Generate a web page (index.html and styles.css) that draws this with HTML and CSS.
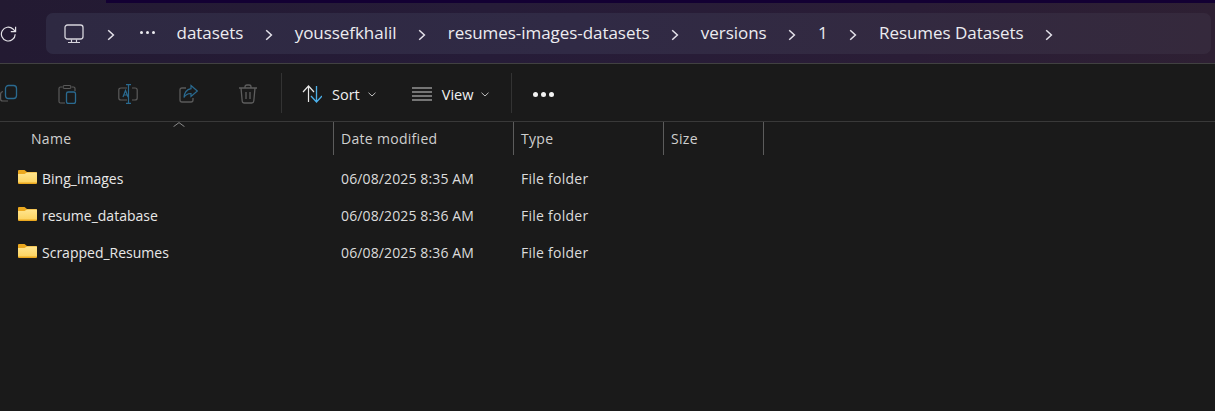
FILE: index.html
```html
<!DOCTYPE html>
<html lang="en">
<head>
<meta charset="utf-8">
<title>Resumes Datasets</title>
<link rel="stylesheet" href="styles.css">
</head>
<body>
<div class="window">
  <header class="addressbar">
    <div class="strip"></div>
    <div class="address-row">
      <svg class="refresh" width="18" height="18" viewBox="0 0 18 18"><path d="M15.200 9.200A6.900 6.900 0 1 1 13 4L15.200 6.200M15.600 1.800V6.600H10.800" fill="none" stroke="#e4e2e8" stroke-width="1.200"/></svg>
      <nav class="crumbs">
        <svg class="pc" width="20" height="20" viewBox="0 0 20 20"><rect x="1" y="1" width="18" height="14" rx="2.500" fill="none" stroke="#d6d4dc" stroke-width="1.300"/><path d="M7.500 15.500v3M12.500 15.500v3M4 18.500h12" fill="none" stroke="#d6d4dc" stroke-width="1.200"/></svg>
        <svg class="chev" width="8" height="12" viewBox="0 0 8 12"><path d="M1.200 1.200 6.400 6 1.200 10.800" /></svg>
        <span class="more"><i></i><i></i><i></i></span>
        <span class="crumb">datasets</span>
        <svg class="chev" width="8" height="12" viewBox="0 0 8 12"><path d="M1.200 1.200 6.400 6 1.200 10.800" /></svg>
        <span class="crumb">youssefkhalil</span>
        <svg class="chev" width="8" height="12" viewBox="0 0 8 12"><path d="M1.200 1.200 6.400 6 1.200 10.800" /></svg>
        <span class="crumb">resumes-images-datasets</span>
        <svg class="chev" width="8" height="12" viewBox="0 0 8 12"><path d="M1.200 1.200 6.400 6 1.200 10.800" /></svg>
        <span class="crumb">versions</span>
        <svg class="chev" width="8" height="12" viewBox="0 0 8 12"><path d="M1.200 1.200 6.400 6 1.200 10.800" /></svg>
        <span class="crumb">1</span>
        <svg class="chev" width="8" height="12" viewBox="0 0 8 12"><path d="M1.200 1.200 6.400 6 1.200 10.800" /></svg>
        <span class="crumb">Resumes Datasets</span>
        <svg class="chev" width="8" height="12" viewBox="0 0 8 12"><path d="M1.200 1.200 6.400 6 1.200 10.800" /></svg>
      </nav>
    </div>
  </header>

  <div class="toolbar">
    <div class="tool-icons">
      <svg class="copy" width="19" height="20" viewBox="0 0 19 20" fill="none"><path d="M4 7.500Q1.600 8 1.600 10v5q0 2 2 2h5.400" stroke="#5a5a5a" stroke-width="1.200"/><rect x="6.500" y="1.500" width="11" height="13" rx="3" stroke="#2a6a90" stroke-width="1.300"/></svg>
      <svg width="19" height="20" viewBox="0 0 19 20" fill="none"><path d="M4 3H2.500Q1 3 1 4.500v13Q1 19 2.500 19H7M14 3h1.500Q17 3 17 4.500V7M5 3q0-1.500 1.500-1.500h5Q13 1.500 13 3t-1.500 1.500h-5Q5 4.500 5 3Z" stroke="#5a5a5a" stroke-width="1.200"/><rect x="8.500" y="8" width="9" height="11.500" rx="1.800" stroke="#2a6a90" stroke-width="1.300"/></svg>
      <svg width="20" height="20" viewBox="0 0 20 20" fill="none"><path d="M9 4H3Q.8 4 .8 6v8q0 2 2.200 2h6M14 4h3q2.200 0 2.200 2v8q0 2-2.200 2h-3" stroke="#5a5a5a" stroke-width="1.200"/><path d="M8 .7h5M10.500.7v18.600M8 19.300h5M5 13l2.500-6.500L10 13M5.800 11H9.200" stroke="#2a6a90" stroke-width="1.200"/></svg>
      <svg width="19" height="20" viewBox="0 0 19 20" fill="none"><path d="M7 4H3Q1 4 1 6v10q0 2 2 2h9q2 0 2-2v-2" stroke="#5a5a5a" stroke-width="1.300"/><path d="M12 1.500 18.300 7 12 12.500V9.500Q7.500 9.300 5 13.500 5.500 6 12 4.700Z" stroke="#2a6a90" stroke-width="1.200"/></svg>
      <svg width="18" height="20" viewBox="0 0 18 20" fill="none"><path d="M0 4H18M6 4V2.800Q6 1 8 1h2q2 0 2 1.800V4M2 4l1.200 13q.2 2 2.200 2h7.200q2 0 2.200-2L16 4M7 8v7M11 8v7" stroke="#5e5e5e" stroke-width="1.300"/></svg>
    </div>
    <div class="sep"></div>
    <div class="tool sort">
      <svg width="20" height="18" viewBox="0 0 20 18" fill="none"><path d="M1 7 6.500 1 12 7M6.500 1V17" stroke="#e8e8e8" stroke-width="1.200"/><path d="M9 11l5.500 6L20 11M14.500 17V1" stroke="#4cb0ea" stroke-width="1.300"/></svg>
      <span>Sort</span>
      <svg class="caret" width="8" height="5" viewBox="0 0 8 5"><path d="M.5.700 4 4 7.500.700"/></svg>
    </div>
    <div class="tool view">
      <svg width="20" height="14" viewBox="0 0 20 14" fill="none"><path d="M0 1H20M0 5H20M0 9H20M0 13H20" stroke="#cfcfcf" stroke-width="1.100"/></svg>
      <span>View</span>
      <svg class="caret" width="8" height="5" viewBox="0 0 8 5"><path d="M.5.700 4 4 7.500.700"/></svg>
    </div>
    <div class="sep sep-view"></div>
    <div class="dots"><i></i><i></i><i></i></div>
  </div>

  <div class="table">
    <div class="row head">
      <div class="cell name-head">Name<svg class="sort-caret" width="12" height="5" viewBox="0 0 12 5"><path d="M.5 4.700 6 .6l5.500 4.100"/></svg></div>
      <div class="cell">Date modified</div>
      <div class="cell">Type</div>
      <div class="cell">Size</div>
    </div>
    <div class="row item">
      <div class="cell name"><svg class="folder" width="19" height="14" viewBox="0 0 19 14"><use href="#folder"/></svg>Bing_images</div>
      <div class="cell date">06/08/2025 8:35 AM</div>
      <div class="cell type">File folder</div>
      <div class="cell"></div>
    </div>
    <div class="row item">
      <div class="cell name"><svg class="folder" width="19" height="14" viewBox="0 0 19 14"><use href="#folder"/></svg>resume_database</div>
      <div class="cell date">06/08/2025 8:36 AM</div>
      <div class="cell type">File folder</div>
      <div class="cell"></div>
    </div>
    <div class="row item">
      <div class="cell name"><svg class="folder" width="19" height="14" viewBox="0 0 19 14"><use href="#folder"/></svg>Scrapped_Resumes</div>
      <div class="cell date">06/08/2025 8:36 AM</div>
      <div class="cell type">File folder</div>
      <div class="cell"></div>
    </div>
  </div>
</div>
<svg class="defs" width="0" height="0">
  <defs>
    <linearGradient id="fold" x1="0" y1="0" x2="0" y2="1"><stop offset="0" stop-color="#ffe58f"/><stop offset="1" stop-color="#fcd462"/></linearGradient>
    <g id="folder">
      <path d="M1 0H6.500L9 2H18Q19 2 19 3V13Q19 14 18 14H1Q0 14 0 13V1Q0 0 1 0Z" fill="#eba81f"/>
      <path d="M0 4H6.500L9 2.500H19V12.500H0Z" fill="url(#fold)"/>
    </g>
  </defs>
</svg>
</body>
</html>
```
FILE: styles.css
```css
* { box-sizing: border-box; }
html, body { margin: 0; padding: 0; }
body {
  width: 1215px;
  height: 411px;
  overflow: hidden;
  background: #1a1a1a;
  font-family: "Open Sans", "Noto Sans", "Liberation Sans", sans-serif;
  color: #e6e6e6;
}
.window { display: flex; flex-direction: column; height: 100%; overflow: hidden; }
.defs { display: block; }

.addressbar {
  height: 64px;
  flex: none;
  background: linear-gradient(90deg, #231a32 0%, #261c38 40%, #2a1d36 75%, #2e2033 100%);
  border-bottom: 1px solid #414141;
}
.strip { height: 3px; margin-left: 106px; background: #130033; }
.address-row { display: flex; align-items: flex-start; padding-top: 10px; }
.refresh { flex: none; margin: 12px 0 0 0; }
.crumbs {
  flex: none;
  display: flex;
  align-items: center;
  gap: 21.700px;
  width: 1165px;
  height: 41px;
  margin-left: 28px;
  padding-left: 18px;
  border-radius: 7px;
  background: linear-gradient(90deg, #2e2942 0%, #302a45 45%, #35293c 100%);
  font-size: 17px;
  letter-spacing: -.05px;
  color: #ececf0;
}
.pc { flex: none; margin-right: 1.500px; }
.chev { flex: none; margin-top: 2px; }
.chev path { fill: none; stroke: #e4e2ea; stroke-width: 1.500; }
.more { display: flex; gap: 3px; width: 15px; flex: none; margin: -3px 0 0 3px; }
.more i { width: 3px; height: 3px; border-radius: 50%; background: #ececf0; flex: none; }
.crumb { white-space: nowrap; margin-top: -3px; }

.toolbar {
  height: 58px;
  flex: none;
  display: flex;
  align-items: center;
  border-bottom: 1px solid #393939;
  font-size: 14.500px;
  color: #f0f0f0;
}
.tool-icons { display: flex; align-items: center; gap: 41px; width: 282px; margin-left: -1px; padding-top: 3px; }
.tool-icons svg { flex: none; overflow: hidden; }
.tool-icons .copy { margin-right: -1px; }
.sep { width: 1px; height: 40px; background: #333; flex: none; margin-top: 1px; }
.tool { display: flex; align-items: center; flex: none; padding-top: 3px; }
.tool span { margin-left: 10px; margin-right: 8px; }
.sort { margin-left: 20px; }
.view { margin-left: 36px; }
.caret path { fill: none; stroke: #bdbdbd; stroke-width: 1; }
.sep-view { margin-left: 22px; }
.dots { display: flex; gap: 3px; margin-left: 21px; margin-top: 3px; }
.dots i { width: 5px; height: 5px; border-radius: 50%; background: #f2f2f2; }

.table { font-size: 14px; color: #dcdcdc; }
.row { display: grid; grid-template-columns: 333px 180px 150px 101px; }
.head { height: 33px; align-items: stretch; color: #cfcfcf; }
.head .cell {
  position: relative;
  border-left: 1px solid #5c5c5c;
  padding: 7px 0 0 7px;
  letter-spacing: .3px;
}
.head .cell.name-head { border-left: 0; padding-left: 31px; }
.head .cell:last-child { border-right: 1px solid #5c5c5c; }
.sort-caret { position: absolute; left: 173px; top: 0; }
.sort-caret path { fill: none; stroke: #8a8a8a; stroke-width: 1; }
.item { height: 37px; align-items: center; }
.item:nth-child(2) { margin-top: 5px; }
.item .cell { padding-left: 8px; white-space: nowrap; }
.item .date { letter-spacing: .13px; }
.item .type { letter-spacing: .25px; }
.item .name { display: flex; align-items: center; padding-left: 18px; color: #e8e8e8; }
.folder { flex: none; margin-right: 5px; margin-bottom: 3px; }
```
